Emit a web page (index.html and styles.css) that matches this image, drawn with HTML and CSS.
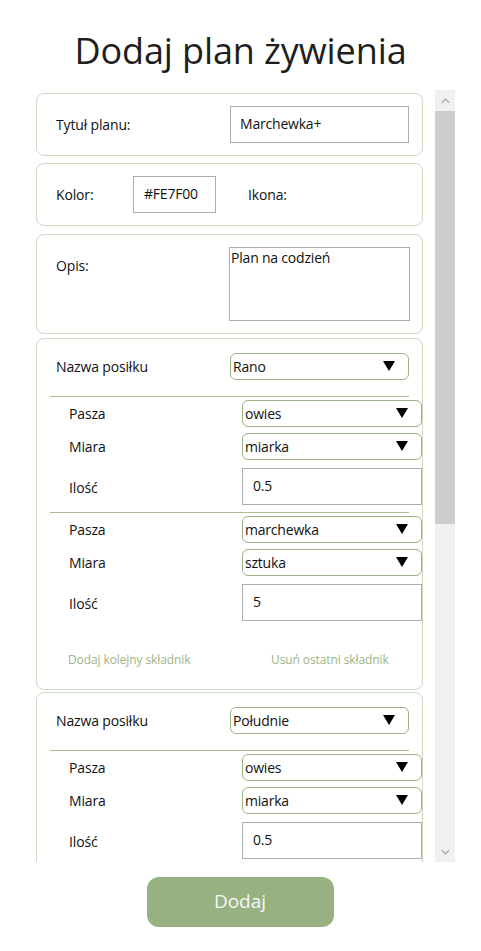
FILE: index.html
```html
<!DOCTYPE html>
<html lang="pl">
<head>
<meta charset="utf-8">
<title>Dodaj plan żywienia</title>
<link rel="stylesheet" href="styles.css">
</head>
<body>
<div class="window">
  <h1 class="title">Dodaj plan żywienia</h1>
  <div class="scroller">
    <div class="content">
      <div class="card card-title">
        <span class="label grow">Tytuł planu:</span>
        <div class="textbox tb-title">Marchewka+</div>
      </div>
      <div class="card card-color">
        <span class="label kolor">Kolor:</span>
        <div class="textbox tb-color">#FE7F00</div>
        <span class="label ikona">Ikona:</span>
      </div>
      <div class="card card-desc">
        <span class="label grow opis">Opis:</span>
        <div class="textarea">Plan na codzień</div>
      </div>

      <div class="card meal">
        <div class="meal-head">
          <span class="label grow">Nazwa posiłku</span>
          <div class="combo combo-meal"><span>Rano</span><svg class="arrow" viewBox="0 0 12 10"><polygon points="0,0 12,0 6,10"/></svg></div>
        </div>
        <div class="sep"></div>
        <div class="irow first"><span class="ilabel">Pasza</span><div class="combo combo-ing"><span>owies</span><svg class="arrow" viewBox="0 0 12 10"><polygon points="0,0 12,0 6,10"/></svg></div></div>
        <div class="irow mid"><span class="ilabel">Miara</span><div class="combo combo-ing"><span>miarka</span><svg class="arrow" viewBox="0 0 12 10"><polygon points="0,0 12,0 6,10"/></svg></div></div>
        <div class="irow qty"><span class="ilabel">Ilość</span><div class="textbox tb-qty">0.5</div></div>
        <div class="sep sep2"></div>
        <div class="irow first second"><span class="ilabel">Pasza</span><div class="combo combo-ing"><span>marchewka</span><svg class="arrow" viewBox="0 0 12 10"><polygon points="0,0 12,0 6,10"/></svg></div></div>
        <div class="irow mid"><span class="ilabel">Miara</span><div class="combo combo-ing"><span>sztuka</span><svg class="arrow" viewBox="0 0 12 10"><polygon points="0,0 12,0 6,10"/></svg></div></div>
        <div class="irow qty"><span class="ilabel">Ilość</span><div class="textbox tb-qty">5</div></div>
        <div class="links">
          <span class="link add">Dodaj kolejny składnik</span>
          <span class="link remove">Usuń ostatni składnik</span>
        </div>
      </div>

      <div class="card meal meal2">
        <div class="meal-head">
          <span class="label grow">Nazwa posiłku</span>
          <div class="combo combo-meal"><span>Południe</span><svg class="arrow" viewBox="0 0 12 10"><polygon points="0,0 12,0 6,10"/></svg></div>
        </div>
        <div class="sep"></div>
        <div class="irow first"><span class="ilabel">Pasza</span><div class="combo combo-ing"><span>owies</span><svg class="arrow" viewBox="0 0 12 10"><polygon points="0,0 12,0 6,10"/></svg></div></div>
        <div class="irow mid"><span class="ilabel">Miara</span><div class="combo combo-ing"><span>miarka</span><svg class="arrow" viewBox="0 0 12 10"><polygon points="0,0 12,0 6,10"/></svg></div></div>
        <div class="irow qty"><span class="ilabel">Ilość</span><div class="textbox tb-qty">0.5</div></div>
      </div>
    </div>
    <div class="scrollbar">
      <div class="sb-btn"><svg viewBox="0 0 10 6"><polyline points="1,5 5,1 9,5"/></svg></div>
      <div class="sb-thumb"></div>
      <div class="sb-track"></div>
      <div class="sb-btn"><svg viewBox="0 0 10 6"><polyline points="1,1 5,5 9,1"/></svg></div>
    </div>
  </div>
  <div class="footer">
    <div class="btn-add">Dodaj</div>
  </div>
</div>
</body>
</html>
```

FILE: styles.css
```css
* { box-sizing: border-box; }
html, body { margin: 0; padding: 0; background: #ffffff; }
body {
  font-family: "Open Sans", "Noto Sans", "DejaVu Sans", sans-serif;
  color: #111111;
  width: 481px;
  height: 951px;
  overflow: hidden;
}
.window { width: 481px; height: 951px; }
.title {
  margin: 0;
  height: 90px;
  padding-top: 29px;
  text-align: center;
  font-weight: 400;
  font-size: 36px;
  line-height: 44px;
  color: #1e1e1e;
  letter-spacing: -0.1px;
}
.scroller {
  display: flex;
  height: 772px;
  margin-left: 36px;
  gap: 12px;
}
.content {
  width: 387px;
  overflow: hidden;
  padding-top: 3px;
}
.card {
  border: 1px solid #cddbc0;
  border-radius: 8px;
  background: #fff;
}
.card-title, .card-color {
  display: flex;
  align-items: center;
  height: 63px;
  padding: 0 13px 0 19px;
}
.card-title { margin-bottom: 7px; }
.card-color { margin-bottom: 8px; }
.card-desc {
  display: flex;
  align-items: flex-start;
  height: 100px;
  padding: 12px 12px 0 19px;
  margin-bottom: 4px;
}
.label { font-size: 14px; line-height: 20px; letter-spacing: -0.15px; }
.grow { flex: 1; }
.opis { margin-top: 9px; }
.kolor { width: 77px; }
.ikona { margin-left: 32px; }
.textbox {
  border: 1px solid #abadb3;
  height: 37px;
  display: flex;
  align-items: center;
  font-size: 14px;
  letter-spacing: -0.2px;
  padding-left: 9px;
  padding-bottom: 2px;
}
.tb-title { width: 179px; }
.tb-color { width: 83px; padding-left: 10px; }
.textarea {
  width: 181px;
  height: 74px;
  border: 1px solid #abadb3;
  font-size: 14px;
  letter-spacing: -0.2px;
  line-height: 18px;
  padding: 1px 0 0 1px;
}
.meal { padding: 14px 0 0 0; margin-bottom: 2px; }
.meal-head {
  display: flex;
  align-items: center;
  padding: 0 13px 0 19px;
}
.combo {
  display: flex;
  align-items: center;
  justify-content: space-between;
  height: 27px;
  border: 1px solid #9ab385;
  border-radius: 6px;
  font-size: 14px;
  letter-spacing: -0.2px;
  padding: 0 13px 1px 2px;
  background: #fff;
}
.combo-meal { width: 179px; }
.combo-ing { width: 180px; padding-right: 13px; }
.arrow { width: 12px; height: 10px; fill: #000; display: block; }
.sep {
  height: 1px;
  background: #a9bd97;
  margin: 16px 13px 0 13px;
}
.sep2 { margin-top: 7px; }
.irow {
  display: flex;
  align-items: center;
  padding-left: 32px;
}
.ilabel { flex: 1; font-size: 14px; letter-spacing: -0.15px; line-height: 20px; }
.irow.first { margin-top: 3px; }
.irow.mid { margin-top: 6px; }
.irow.qty { margin-top: 8px; }
.irow.qty .ilabel { padding-top: 3px; }
.tb-qty { width: 180px; padding-left: 10px; }
.links {
  display: flex;
  padding: 31px 0 21px 31px;
  font-size: 12px;
  line-height: 16px;
  color: #9db487;
  letter-spacing: -0.1px;
}
.link.add { width: 203px; }
.meal2 { margin-bottom: 0; padding-bottom: 40px; }
.scrollbar {
  width: 20px;
  height: 772px;
  background: #f0f0f0;
  display: flex;
  flex-direction: column;
}
.sb-btn {
  height: 21px;
  display: flex;
  align-items: center;
  justify-content: center;
}
.sb-btn svg {
  width: 9px;
  height: 6px;
  fill: none;
  stroke: #a0a0a0;
  stroke-width: 1.3;
}
.sb-thumb { height: 413px; background: #cdcdcd; }
.sb-track { flex: 1; }
.footer {
  display: flex;
  justify-content: center;
  padding-top: 15px;
  padding-right: 1px;
}
.btn-add {
  width: 187px;
  height: 50px;
  border-radius: 12px;
  background: #97b180;
  color: #f6f6f6;
  font-size: 19px;
  display: flex;
  align-items: center;
  justify-content: center;
  padding-bottom: 3px;
}
```
